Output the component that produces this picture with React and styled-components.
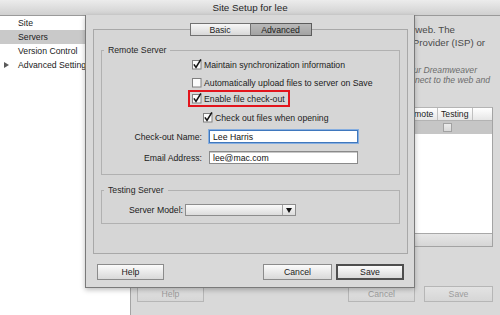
import React from "react";
import styled, { createGlobalStyle } from "styled-components";

const GlobalStyle = createGlobalStyle`
  html, body {
    margin: 0;
    padding: 0;
  }
  body {
    width: 500px;
    height: 315px;
    overflow: hidden;
    background: #d8d8d8;
    color: #1b1b1b;
    font-family: "Liberation Sans", Arial, sans-serif;
    font-size: 8.7px;
  }
  * {
    box-sizing: border-box;
  }
`;

const Window = styled.div`
  position: relative;
  width: 500px;
  height: 315px;
  display: flex;
  flex-direction: column;
  overflow: hidden;
`;

const TitleBar = styled.div`
  flex: none;
  height: 16px;
  display: flex;
  align-items: center;
  justify-content: center;
  padding-bottom: 1px;
  background: linear-gradient(#ececec, #d0d0d0);
  border-bottom: 1px solid #9a9a9a;
  font-size: 9.8px;
  color: #262626;
`;

const Body = styled.div`
  flex: 1;
  display: flex;
  min-height: 0;
`;

const Sidebar = styled.div`
  flex: none;
  width: 131px;
  background: #fff;
  border-right: 1px solid #a4a4a4;
`;

const NavItem = styled.div`
  height: 14px;
  display: flex;
  align-items: center;
  padding-left: 18px;
  position: relative;
  background: ${(p) => (p.$active ? "#c9c9c9" : "transparent")};
  white-space: nowrap;
`;

const Disclosure = styled.svg`
  position: absolute;
  left: 4px;
  top: 4px;
`;

const Content = styled.div`
  flex: 1;
  display: flex;
  flex-direction: column;
  padding: 7px 7px 0 6px;
  background: #d9d9d9;
  overflow: hidden;
`;

const Intro = styled.div`
  font-size: 9.7px;
  line-height: 13px;
  color: #4a4a4a;
`;

const Note = styled.div`
  margin-top: 16px;
  font-size: 8.6px;
  line-height: 10px;
  font-style: italic;
  color: #6c6c6c;
`;

const Line = styled.div`
  white-space: nowrap;
  text-align: right;
  padding-right: ${(p) => p.$end}px;
`;

const Table = styled.div`
  margin-top: 22px;
  height: 140px;
  display: flex;
  flex-direction: column;
  border: 1px solid #a3a3a3;
  border-top-color: #b4b4b4;
  background: #fff;
`;

const TableHead = styled.div`
  flex: none;
  height: 13px;
  display: grid;
  grid-template-columns: 1fr 36px 35px 19px;
  background: linear-gradient(#ffffff, #e6e6e6);
  border-bottom: 1px solid #b3b3b3;
`;

const HeadCell = styled.div`
  display: flex;
  align-items: center;
  padding-left: ${(p) => p.$pad ?? 3}px;
  border-right: ${(p) => (p.$last ? "none" : "1px solid #c0c0c0")};
  white-space: nowrap;
  overflow: hidden;
`;

const TableRow = styled.div`
  flex: none;
  height: 13px;
  display: grid;
  grid-template-columns: 1fr 36px 35px 19px;
  background: #c6c6c6;
`;

const Cell = styled.div`
  display: flex;
  align-items: center;
  padding-left: ${(p) => p.$pad || 0}px;
`;

const TableBody = styled.div`
  flex: 1;
  background: #fff;
`;

const TableFoot = styled.div`
  flex: none;
  height: 13px;
  background: linear-gradient(#e6e6e6, #d6d6d6);
  border-top: 1px solid #a8a8a8;
`;

const ButtonBar = styled.div`
  flex: none;
  display: flex;
  align-items: center;
  height: 16px;
  margin-top: ${(p) => p.$mt}px;
  padding: ${(p) => p.$pad};
`;

const Spacer = styled.div`
  flex: 1;
`;

const Button = styled.div`
  flex: none;
  width: ${(p) => p.$w}px;
  height: 16px;
  margin-left: ${(p) => p.$ml || 0}px;
  display: flex;
  align-items: center;
  justify-content: center;
  background: ${(p) =>
    p.$ghost
      ? "linear-gradient(#e3e3e3, #d6d6d6)"
      : "linear-gradient(#fbfbfb, #d9d9d9)"};
  border: ${(p) =>
    p.$default
      ? "2px solid #4e4e4e"
      : p.$ghost
      ? "1px solid #b6b6b6"
      : "1px solid #8b8b8b"};
  color: ${(p) => (p.$ghost ? "#9c9c9c" : "#1b1b1b")};
`;

/* sheet dialog laid over the window */
const Sheet = styled.div`
  position: absolute;
  left: 85px;
  top: 15px;
  width: 330px;
  height: 273px;
  display: flex;
  flex-direction: column;
  padding: 8px 6px 7px 7px;
  background: #d9d9d9;
  border: 1px solid #7a7a7a;
  border-top: none;
  box-shadow: 0 2px 5px rgba(0, 0, 0, 0.25);
  z-index: 2;
`;

const TabRow = styled.div`
  position: relative;
  z-index: 1;
  flex: none;
  height: 13px;
  display: flex;
  justify-content: center;
`;

const Tab = styled.div`
  width: 61px;
  height: 13px;
  display: flex;
  align-items: center;
  justify-content: center;
  border: 1px solid ${(p) => (p.$active ? "#5c5c5c" : "#727272")};
  border-left-width: ${(p) => (p.$first ? 1 : 0)}px;
  background: ${(p) =>
    p.$active
      ? "linear-gradient(#b9b9b9, #a3a3a3)"
      : "linear-gradient(#f7f7f7, #d8d8d8)"};
`;

const Panel = styled.div`
  flex: 1;
  margin-top: -7px;
  padding: 15px 7px 0 7px;
  border: 1px solid #a8a8a8;
  background: #d6d6d6;
`;

const Group = styled.fieldset`
  margin: ${(p) => p.$mt || 0}px 0 0 0;
  padding: 0 0 ${(p) => p.$pb}px 0;
  border: 1px solid #b1b1b1;
  min-width: 0;
`;

const Legend = styled.legend`
  margin-left: 2px;
  padding: 0 4px;
  line-height: 11px;
  color: #262626;
`;

const CheckRow = styled.div`
  display: flex;
  align-items: center;
  height: 13px;
  margin-top: ${(p) => p.$mt}px;
  margin-left: ${(p) => p.$indent}px;
  white-space: nowrap;
`;

const Highlight = styled.div`
  align-self: flex-start;
  display: flex;
  align-items: center;
  height: 17px;
  margin-top: ${(p) => p.$mt}px;
  margin-left: ${(p) => p.$indent}px;
  padding: 0 3px 0 2px;
  border: 2px solid #e3141c;
  white-space: nowrap;
`;

const Rows = styled.div`
  display: flex;
  flex-direction: column;
`;

const FieldRow = styled.div`
  display: flex;
  align-items: center;
  height: ${(p) => p.$h || 13}px;
  margin-top: ${(p) => p.$mt}px;
`;

const Label = styled.div`
  flex: none;
  width: ${(p) => p.$w}px;
  margin-right: ${(p) => p.$gap}px;
  text-align: right;
  white-space: nowrap;
`;

const TextInput = styled.input`
  width: 149px;
  height: 13px;
  margin: 0;
  padding: 0 3px;
  font: inherit;
  color: #111;
  background: #fff;
  border: 1px solid ${(p) => (p.$focused ? "#3f77bd" : "#8a8a8a")};
  box-shadow: ${(p) =>
    p.$focused ? "0 0 0 1px #86aee0" : "inset 0 1px 0 #c8c8c8"};
  outline: none;
`;

const Select = styled.div`
  width: 111px;
  height: 12px;
  display: flex;
  border: 1px solid #8d8d8d;
  background: linear-gradient(#fafafa, #dcdcdc);
`;

const SelectValue = styled.div`
  flex: 1;
`;

const SelectArrow = styled.div`
  flex: none;
  width: 13px;
  display: flex;
  align-items: center;
  justify-content: center;
  border-left: 1px solid #a3a3a3;
`;

const Box = styled.svg`
  flex: none;
  margin-right: 2px;
  overflow: visible;
`;

const CheckBox = ({ checked }) => (
  <Box width="10" height="10" viewBox="0 0 10 10">
    <rect x="0.5" y="0.5" width="8.5" height="8.5" fill="#fbfbfb" stroke="#808080" />
    {checked && (
      <path
        d="M1.9 4.4 L4 7.4 L8.9 -0.6"
        fill="none"
        stroke="#141414"
        strokeWidth="1.6"
        strokeLinejoin="miter"
      />
    )}
  </Box>
);

const SmallBox = styled.div`
  width: 9px;
  height: 9px;
  border: 1px solid #a2a2a2;
  background: linear-gradient(#ececec, #d9d9d9);
`;

export default function App() {
  return (
    <>
      <GlobalStyle />
      <Window>
        <TitleBar>Site Setup for lee</TitleBar>
        <Body>
          <Sidebar>
            <NavItem>Site</NavItem>
            <NavItem $active>Servers</NavItem>
            <NavItem>Version Control</NavItem>
            <NavItem>
              <Disclosure width="5" height="6" viewBox="0 0 5 6">
                <path d="M0 0 L5 3 L0 6 Z" fill="#5a5a5a" />
              </Disclosure>
              Advanced Settings
            </NavItem>
          </Sidebar>
          <Content>
            <Intro>
              <Line $end={38}>the web. The</Line>
              <Line $end={8}>Service Provider (ISP) or</Line>
            </Intro>
            <Note>
              <Line $end={16}>your Dreamweaver</Line>
              <Line $end={3}>connect to the web and</Line>
            </Note>
            <Table>
              <TableHead>
                <HeadCell>Name</HeadCell>
                <HeadCell $pad={1}>Remote</HeadCell>
                <HeadCell $pad={3}>Testing</HeadCell>
                <HeadCell $last />
              </TableHead>
              <TableRow>
                <Cell />
                <Cell />
                <Cell $pad={5}>
                  <SmallBox />
                </Cell>
                <Cell />
              </TableRow>
              <TableBody />
              <TableFoot />
            </Table>
            <ButtonBar $mt={39} $pad="0">
              <Button $w={67} $ghost>
                Help
              </Button>
              <Spacer />
              <Button $w={67} $ghost>
                Cancel
              </Button>
              <Button $w={69} $ml={9} $ghost>
                Save
              </Button>
            </ButtonBar>
          </Content>
        </Body>

        <Sheet>
          <TabRow>
            <Tab $first>Basic</Tab>
            <Tab $active>Advanced</Tab>
          </TabRow>
          <Panel>
            <Group $pb={10}>
              <Legend>Remote Server</Legend>
              <Rows>
                <CheckRow $mt={2} $indent={90}>
                  <CheckBox checked />
                  Maintain synchronization information
                </CheckRow>
                <CheckRow $mt={5} $indent={90}>
                  <CheckBox />
                  Automatically upload files to server on Save
                </CheckRow>
                <Highlight $mt={1} $indent={86}>
                  <CheckBox checked />
                  Enable file check-out
                </Highlight>
                <CheckRow $mt={4} $indent={101}>
                  <CheckBox checked />
                  Check out files when opening
                </CheckRow>
                <FieldRow $mt={6}>
                  <Label $w={100} $gap={7}>
                    Check-out Name:
                  </Label>
                  <TextInput $focused readOnly value="Lee Harris" />
                </FieldRow>
                <FieldRow $mt={8}>
                  <Label $w={100} $gap={7}>
                    Email Address:
                  </Label>
                  <TextInput readOnly value="lee@mac.com" />
                </FieldRow>
              </Rows>
            </Group>
            <Group $mt={10} $pb={7}>
              <Legend>Testing Server</Legend>
              <FieldRow $mt={8} $h={12}>
                <Label $w={81} $gap={2}>
                  Server Model:
                </Label>
                <Select>
                  <SelectValue />
                  <SelectArrow>
                    <svg width="6" height="5" viewBox="0 0 6 5">
                      <path d="M0 0 H6 L3 5 Z" fill="#111" />
                    </svg>
                  </SelectArrow>
                </Select>
              </FieldRow>
            </Group>
          </Panel>
          <ButtonBar $mt={10} $pad="0 4px">
            <Button $w={67}>Help</Button>
            <Spacer />
            <Button $w={69}>Cancel</Button>
            <Button $w={68} $ml={4} $default>
              Save
            </Button>
          </ButtonBar>
        </Sheet>
      </Window>
    </>
  );
}
